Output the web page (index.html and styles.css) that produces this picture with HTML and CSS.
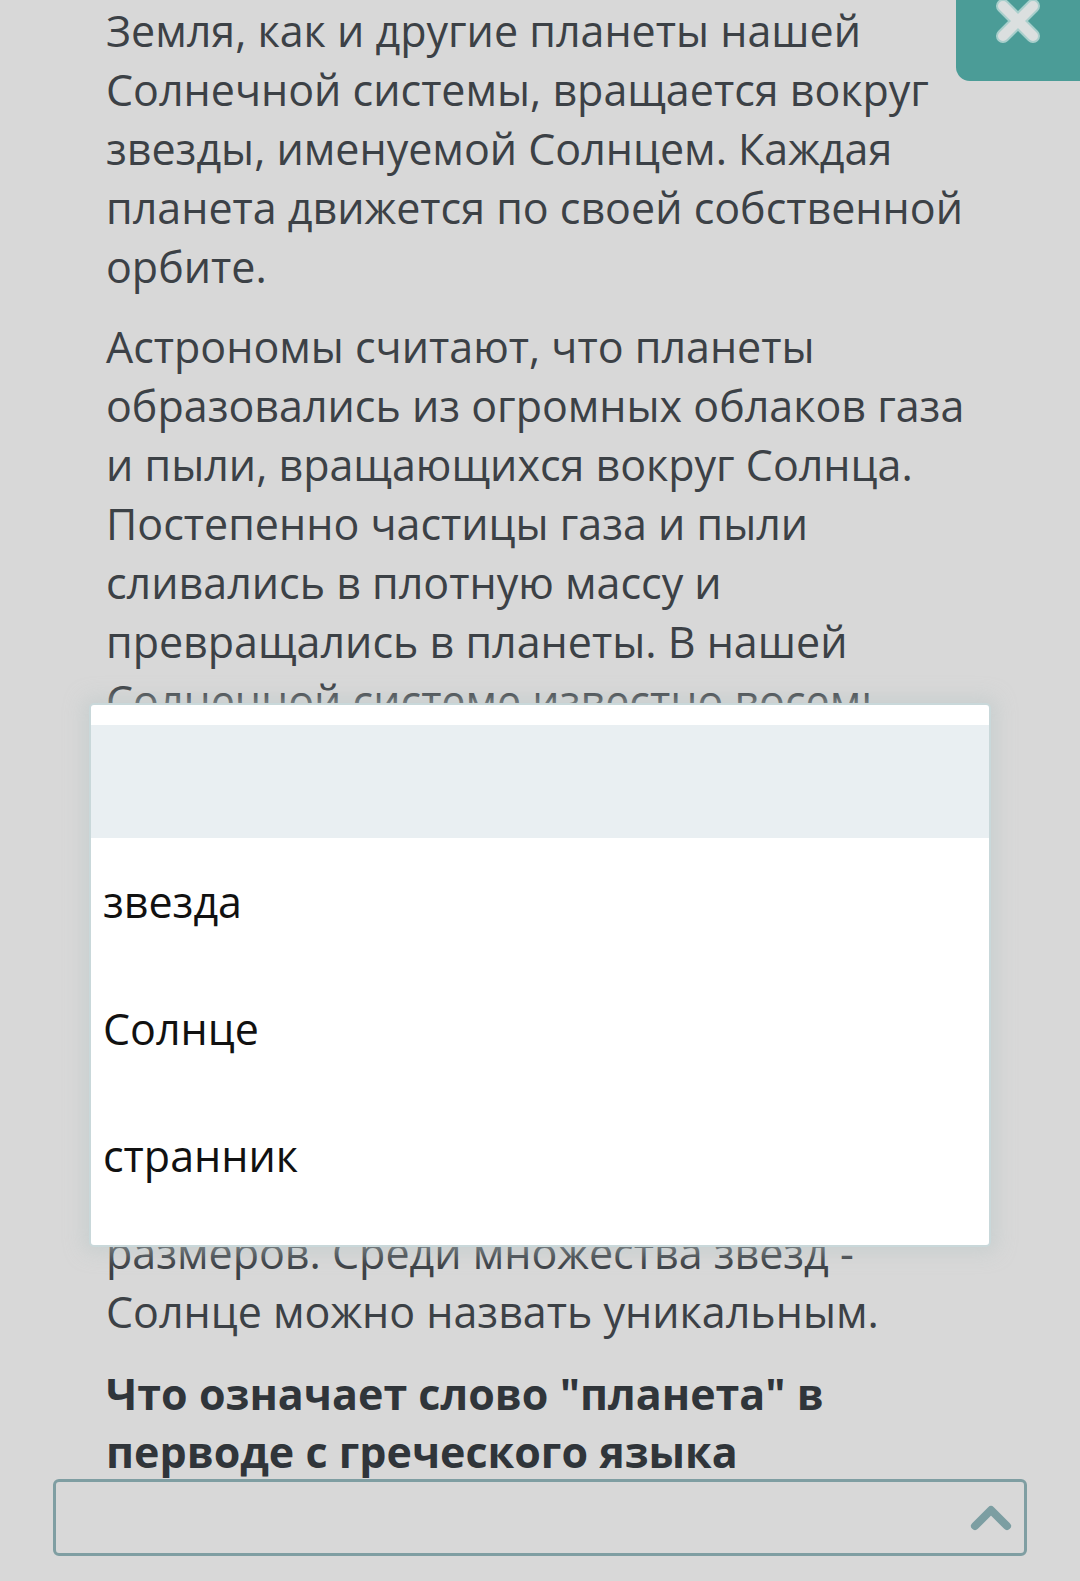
FILE: index.html
```html
<!DOCTYPE html>
<html lang="ru">
<head>
<meta charset="utf-8">
<title>Планета</title>
<link rel="stylesheet" href="styles.css">
</head>
<body>
<div class="page">
  <div class="reading">
    <p class="para">Земля, как и другие планеты нашей<br>Солнечной системы, вращается вокруг<br>звезды, именуемой Солнцем. Каждая<br>планета движется по своей собственной<br>орбите.</p>
    <p class="para">Астрономы считают, что планеты<br>образовались из огромных облаков газа<br>и пыли, вращающихся вокруг Солнца.<br>Постепенно частицы газа и пыли<br>сливались в плотную массу и<br>превращались в планеты. В нашей<br>Солнечной системе известно восемь<br>планет: Меркурий, Венера, Земля,<br>Марс, Юпитер, Сатурн, Уран, Нептун.</p>
    <p class="para">Солнце — это звезда, огромный<br>раскалённый газовый шар, который<br>излучает свет и тепло. Во Вселенной<br>существует бесчисленное множество<br>звёзд. Они бывают разных цветов,<br>температуры и самых различных<br>размеров. Среди множества звезд -<br>Солнце можно назвать уникальным.</p>
    <p class="para question">Что означает слово "планета" в<br>перводе с греческого языка</p>
  </div>
  <div class="select">
    <svg class="chevron" width="44" height="28" viewBox="0 0 44 28"><path d="M6 22 L22 6 L38 22" fill="none" stroke="#7c9ea2" stroke-width="8" stroke-linecap="round" stroke-linejoin="round"/></svg>
  </div>
</div>

<button class="close" aria-label="Закрыть">
  <svg width="50" height="50" viewBox="0 0 50 50"><path d="M10 10 L40 40 M40 10 L10 40" stroke="#a9cfcc" stroke-width="14" stroke-linecap="round"/><path d="M10 10 L40 40 M40 10 L10 40" stroke="#dbdfdf" stroke-width="10" stroke-linecap="round"/></svg>
</button>

<div class="dropdown">
  <div class="option blank"></div>
  <div class="option">звезда</div>
  <div class="option">Солнце</div>
  <div class="option">странник</div>
</div>
</body>
</html>
```

FILE: styles.css
```css
html, body {
  margin: 0;
  padding: 0;
}
body {
  background: #d8d8d8;
  font-family: "Open Sans", "Noto Sans", sans-serif;
  width: 1080px;
  height: 1581px;
  overflow: hidden;
  position: relative;
}
.page {
  padding: 1px 53px 0 53px;
}
.reading {
  padding: 0 53px;
}
.para {
  margin: 0 0 21px 0;
  font-size: 43px;
  line-height: 59px;
  color: #3c4146;
  white-space: nowrap;
}
.question {
  font-weight: 700;
  color: #30353a;
  line-height: 57.5px;
  margin-top: 24px;
  margin-bottom: 0;
}
.select {
  height: 71px;
  border: 3px solid #7f9ea2;
  border-radius: 6px;
  display: flex;
  align-items: center;
  justify-content: flex-end;
  padding-right: 11px;
  margin-top: -1px;
}
.chevron {
  display: block;
}
.close {
  position: absolute;
  top: 0;
  right: 0;
  width: 124px;
  height: 81px;
  background: #4b9c97;
  border: none;
  border-radius: 0 0 0 14px;
  padding: 0;
  margin: 0;
  display: flex;
  align-items: flex-start;
  justify-content: center;
}
.close svg {
  display: block;
  margin-top: -4px;
}
.dropdown {
  position: absolute;
  left: 89px;
  top: 703px;
  width: 898px;
  height: 520px;
  background: #ffffff;
  border: 2px solid #c9d8da;
  border-radius: 5px;
  box-shadow: 0 0 18px 6px rgba(190, 200, 200, 0.55);
  padding: 20px 0 0 0;
  box-sizing: content-box;
}
.option {
  height: 127px;
  padding-left: 12px;
  display: flex;
  align-items: center;
  font-size: 43px;
  color: #111111;
  font-family: "Open Sans", "Noto Sans", sans-serif;
}
.option.blank {
  height: 113px;
  background: #e9eff2;
}
```
